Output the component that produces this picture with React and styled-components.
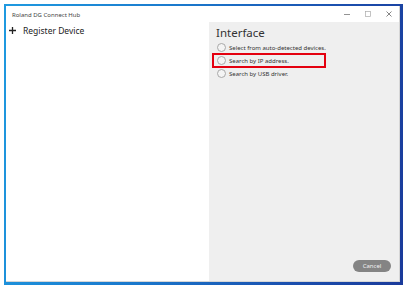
import React from "react";
import styled, { createGlobalStyle } from "styled-components";

const GlobalStyle = createGlobalStyle`
  html, body {
    margin: 0;
    padding: 0;
    background: #ffffff;
    font-family: "Noto Sans", "Open Sans", sans-serif;
  }
`;

const Page = styled.div`
  width: 405px;
  height: 289px;
  padding: 4px 2px 4px 4px;
  box-sizing: border-box;
`;

const Frame = styled.div`
  width: 399px;
  height: 281px;
  box-sizing: border-box;
  padding: 2px 3px 3px 2px;
  background: linear-gradient(100deg, #1f9ae0 0%, #1a78cc 40%, #1b4fae 75%, #1a3a9a 100%);
`;

const Window = styled.div`
  width: 100%;
  height: 100%;
  background: #ffffff;
  display: flex;
  flex-direction: column;
  border-right: 1px solid #d6d6d6;
  border-bottom: 1px solid #d6d6d6;
  box-sizing: border-box;
`;

const TitleBar = styled.div`
  height: 16px;
  display: flex;
  align-items: center;
  padding-left: 6px;
  flex-shrink: 0;
`;

const Title = styled.span`
  font-size: 6px;
  color: #444;
  flex: 1;
  margin-top: 1px;
`;

const Controls = styled.div`
  display: flex;
  height: 100%;
`;

const Control = styled.div`
  width: 21px;
  display: flex;
  align-items: center;
  justify-content: center;
`;

const Body = styled.div`
  flex: 1;
  display: flex;
  min-height: 0;
`;

const LeftPane = styled.div`
  width: 203px;
  padding: 3px 0 0 3px;
  box-sizing: border-box;
`;

const RegisterRow = styled.div`
  display: flex;
  align-items: center;
  gap: 7px;
  font-size: 8.5px;
  color: #222;
`;

const RightPane = styled.div`
  flex: 1;
  background: #efefef;
  display: flex;
  flex-direction: column;
  padding: 3px 8px 8px 7px;
  box-sizing: border-box;
`;

const Heading = styled.h2`
  margin: 0 0 1px 0;
  font-size: 11.5px;
  font-weight: 400;
  color: #333;
`;

const Options = styled.div`
  display: flex;
  flex-direction: column;
`;

const Option = styled.div`
  height: 13px;
  display: flex;
  align-items: center;
  gap: 3px;
  padding-left: 1px;
  font-size: 6px;
  color: #333;
  position: relative;
`;

const Radio = styled.span`
  width: 7px;
  height: 7px;
  border-radius: 50%;
  border: 1px solid #a8a8a8;
  background: #f4f4f4;
  flex-shrink: 0;
`;

const Highlight = styled.div`
  position: absolute;
  left: -4px;
  top: -1px;
  width: 114px;
  height: 15px;
  border: 2px solid #e4000f;
  box-sizing: border-box;
`;

const Footer = styled.div`
  margin-top: auto;
  display: flex;
  justify-content: flex-end;
`;

const CancelButton = styled.button`
  width: 38px;
  height: 12px;
  border: none;
  border-radius: 6px;
  background: #848484;
  color: #f2f2f2;
  font-family: inherit;
  font-size: 6px;
  padding: 0;
  line-height: 12px;
  margin-bottom: 1px;
`;

const options = [
  { label: "Select from auto-detected devices.", marked: false },
  { label: "Search by IP address.", marked: true },
  { label: "Search by USB driver.", marked: false },
];

const App = () => {
  return (
    <Page>
      <GlobalStyle />
      <Frame>
        <Window>
          <TitleBar>
            <Title>Roland DG Connect Hub</Title>
            <Controls>
              <Control>
                <svg width="6" height="6" viewBox="0 0 6 6">
                  <path d="M0 3.5h6" stroke="#777" strokeWidth="0.8" />
                </svg>
              </Control>
              <Control>
                <svg width="6" height="6" viewBox="0 0 6 6">
                  <rect x="0.5" y="0.5" width="5" height="5" fill="none" stroke="#aaa" strokeWidth="0.7" />
                </svg>
              </Control>
              <Control>
                <svg width="6" height="6" viewBox="0 0 6 6">
                  <path d="M0.5 0.5l5 5M5.5 0.5l-5 5" stroke="#666" strokeWidth="0.8" />
                </svg>
              </Control>
            </Controls>
          </TitleBar>
          <Body>
            <LeftPane>
              <RegisterRow>
                <svg width="7" height="7" viewBox="0 0 7 7">
                  <path d="M3.5 0v7M0 3.5h7" stroke="#222" strokeWidth="1.3" />
                </svg>
                Register Device
              </RegisterRow>
            </LeftPane>
            <RightPane>
              <Heading>Interface</Heading>
              <Options>
                {options.map((o) => (
                  <Option key={o.label}>
                    <Radio />
                    {o.label}
                    {o.marked && <Highlight />}
                  </Option>
                ))}
              </Options>
              <Footer>
                <CancelButton>Cancel</CancelButton>
              </Footer>
            </RightPane>
          </Body>
        </Window>
      </Frame>
    </Page>
  );
};

export default App;
